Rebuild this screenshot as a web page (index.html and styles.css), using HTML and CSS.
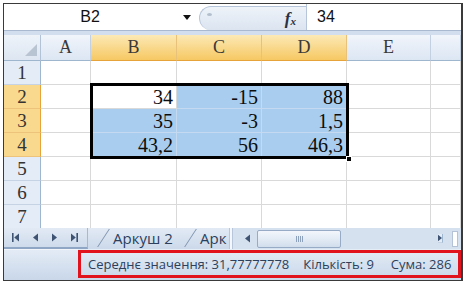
FILE: index.html
```html
<!DOCTYPE html>
<html lang="uk">
<head>
<meta charset="utf-8">
<title>Excel</title>
<link rel="stylesheet" href="styles.css">
</head>
<body>
<div class="window">
  <div class="fbar">
    <div class="namebox"><span class="name">B2</span><span class="arrow"></span></div>
    <div class="fxzone">
      <div class="pill"><span class="grip"></span><span class="fx"><i>f</i><sub>x</sub></span></div>
    </div>
    <div class="finput">34</div>
  </div>
  <div class="sep"></div>
  <div class="sheet">
    <div class="corner"><span class="tri"></span></div>
    <div class="h">A</div><div class="h sel">B</div><div class="h sel">C</div><div class="h sel">D</div><div class="h">E</div><div class="h"></div>

    <div class="r">1</div><div class="c"></div><div class="c"></div><div class="c"></div><div class="c"></div><div class="c"></div><div class="c"></div>
    <div class="r sel">2</div><div class="c"></div><div class="c">34</div><div class="c s">-15</div><div class="c s">88</div><div class="c"></div><div class="c"></div>
    <div class="r sel">3</div><div class="c"></div><div class="c s">35</div><div class="c s">-3</div><div class="c s">1,5</div><div class="c"></div><div class="c"></div>
    <div class="r sel">4</div><div class="c"></div><div class="c s">43,2</div><div class="c s">56</div><div class="c s">46,3</div><div class="c"></div><div class="c"></div>
    <div class="r">5</div><div class="c"></div><div class="c"></div><div class="c"></div><div class="c"></div><div class="c"></div><div class="c"></div>
    <div class="r">6</div><div class="c"></div><div class="c"></div><div class="c"></div><div class="c"></div><div class="c"></div><div class="c"></div>
    <div class="r">7</div><div class="c"></div><div class="c"></div><div class="c"></div><div class="c"></div><div class="c"></div><div class="c"></div>

    <div class="selbox"><span class="handle"></span></div>
  </div>
  <div class="tabbar">
    <div class="nav">
      <svg width="7" height="9" viewBox="0 0 7 9"><rect x="0" y="0" width="1.6" height="9" fill="#3f5473"/><path d="M7 0.5 L2.2 4.5 L7 8.5 Z" fill="#3f5473"/></svg>
      <svg width="5" height="9" viewBox="0 0 5 9"><path d="M5 0.5 L0 4.5 L5 8.5 Z" fill="#3f5473"/></svg>
      <svg width="5" height="9" viewBox="0 0 5 9"><path d="M0 0.5 L5 4.5 L0 8.5 Z" fill="#3f5473"/></svg>
      <svg width="7" height="9" viewBox="0 0 7 9"><path d="M0 0.5 L4.8 4.5 L0 8.5 Z" fill="#3f5473"/><rect x="5.4" y="0" width="1.6" height="9" fill="#3f5473"/></svg>
    </div>
    <div class="tab t1">Аркуш 2</div>
    <div class="tab t2">Арк</div>
    <div class="split"></div>
    <div class="hscroll">
      <svg class="sarrow" width="5" height="9" viewBox="0 0 5 9"><path d="M5 0.5 L0 4.5 L5 8.5 Z" fill="#3f5473"/></svg>
      <div class="thumb"><span class="gl"></span></div>
      <svg class="sarrow r" width="5" height="9" viewBox="0 0 5 9"><path d="M0 0.5 L5 4.5 L0 8.5 Z" fill="#3f5473"/></svg>
      <div class="vbox"></div>
    </div>
  </div>
  <div class="status">
    <div class="sleft"></div>
    <div class="sbox">
      <span class="st st1">Середнє значення: 31,77777778</span>
      <span class="st st2">Кількість: 9</span>
      <span class="st st3">Сума: 286</span>
    </div>
  </div>
</div>
</body>
</html>
```
FILE: styles.css
```css
* { box-sizing: border-box; margin: 0; padding: 0; }
html, body { background: #fff; }
body { width: 468px; height: 282px; overflow: hidden; font-family: "Open Sans", sans-serif; }

.window {
  margin: 3px 0 0 3px;
  width: 460px;
  height: 278px;
  border: 1px solid #3a3a3a;
  border-right-width: 2px;
  display: flex;
  flex-direction: column;
  overflow: hidden;
  background: #fff;
}

/* formula bar */
.fbar { height: 27px; display: flex; border-bottom: 1px solid #a9bad0; background: #fff; }
.namebox { flex: 0 0 192px; display: flex; align-items: center; }
.name { width: 172px; text-align: center; font: 16px "Liberation Sans", sans-serif; color: #111; }
.arrow { margin-left: 7px; width: 0; height: 0; border-top: 5px solid #111; border-left: 4px solid transparent; border-right: 4px solid transparent; }
.fxzone { flex: 0 0 110px; padding: 2px 0 0 3px; }
.pill {
  height: 100%;
  border: 1px solid #b6c5d9;
  border-right: none;
  border-bottom: none;
  border-radius: 12px 0 0 12px;
  background: linear-gradient(#eef3f9, #dbe4f0);
  display: flex;
  align-items: center;
  justify-content: space-between;
  padding: 0 10px 0 7px;
}
.grip { width: 5px; height: 3px; border-radius: 50%; background: #b3bfcf; align-self: flex-start; margin-top: 6px; }
.fx { font: bold 17px "Liberation Serif", serif; color: #2a3142; line-height: 1; }
.fx i { font-style: italic; }
.fx sub { font-size: 11px; font-style: italic; vertical-align: -1px; }
.finput { flex: 1; border-left: 1px solid #b6c5d9; padding-left: 10px; font: 16px/26px "Liberation Sans", sans-serif; color: #111; }

.sep { height: 4px; background: #d2deed; }

/* sheet */
.sheet {
  position: relative;
  height: 193px;
  flex: 0 0 193px;
  overflow: hidden;
  display: grid;
  grid-template-columns: 37px 50px 86px 85px 85px 84px 30px;
  grid-template-rows: 26px repeat(7, 24px);
}
.corner { background: linear-gradient(#eef3fa, #dde6f2); border-right: 1px solid #b3c3d7; border-bottom: 1px solid #9eb6ce; position: relative; }
.tri { position: absolute; right: 3px; bottom: 4px; width: 0; height: 0; border-left: 12px solid transparent; border-bottom: 12px solid #b9c4d2; }
.h {
  background: linear-gradient(#f1f5fb, #dce6f3);
  border-right: 1px solid #c3d0e1;
  border-bottom: 1px solid #9eb6ce;
  font: 18px/25px "Liberation Serif", serif;
  color: #3a3a3a;
  text-align: center;
}
.h.sel { background: linear-gradient(#fce9b5, #f6c863); border-right-color: #e8c27a; border-bottom-color: #e6a33a; }
.r {
  background: #e4ecf7;
  border-right: 1px solid #9eb6ce;
  border-bottom: 1px solid #c5d3e4;
  font: 19px/23px "Liberation Serif", serif;
  color: #333;
  text-align: center;
}
.r.sel { background: #f9d98e; border-right-color: #e6a33a; border-bottom-color: #edc27a; }
.c {
  border-right: 1px solid #d9d9d9;
  border-bottom: 1px solid #d9d9d9;
  font: 20px/24px "Liberation Serif", serif;
  color: #0d0d0d;
  text-align: right;
  padding-right: 3px;
}
.c.s { background: #a9cdef; border-color: #c5daf1; }
.selbox {
  position: absolute;
  left: 86px;
  top: 48px;
  width: 259px;
  height: 76px;
  border: 3px solid #000;
  z-index: 1;
}
.handle { position: absolute; right: -6px; bottom: -6px; width: 6px; height: 6px; background: #000; border: 1px solid #fff; }

/* tab bar */
.tabbar { height: 21px; flex: 0 0 21px; display: flex; background: linear-gradient(#e2eaf5, #ccd9ea); }
.nav {
  flex: 0 0 84px;
  display: flex;
  align-items: center;
  gap: 14px;
  padding: 0 0 1px 8px;
  border-right: 1px solid #a7b8cf;
  border-bottom: 2px solid #8fa6c5;
}
.tab {
  position: relative;
  font: 15px/21px "Open Sans", sans-serif;
  color: #2c3f5d;
  white-space: nowrap;
  overflow: hidden;
}
.tab::before {
  content: "";
  position: absolute;
  left: 0;
  top: 1px;
  width: 1px;
  height: 18px;
  background: #7f93ae;
}
.t1 { flex: 0 0 92px; padding-left: 25px; }
.t1::before { left: 15px; transform: skewX(-33deg); }
.t2 { flex: 0 0 49px; padding-left: 20px; }
.t2::before { left: 10px; transform: skewX(-33deg); }
.split { flex: 0 0 4px; background: #f4f7fb; border-left: 1px solid #b7c6da; border-right: 1px solid #b7c6da; }
.hscroll { flex: 1; display: flex; align-items: center; background: #d6e1ef; padding-left: 12px; }
.sarrow { flex: 0 0 auto; }
.thumb {
  margin-left: 7px;
  width: 84px;
  height: 18px;
  border: 1px solid #97abc6;
  border-radius: 2px;
  background: linear-gradient(#f3f7fc, #d2deed);
  display: flex;
  align-items: center;
  justify-content: center;
}
.gl { width: 7px; height: 6px; background: repeating-linear-gradient(90deg, #8ea1ba 0 1px, transparent 1px 2px); }
.sarrow.r { margin-left: 97px; }
.vbox { margin-left: 9px; width: 6px; height: 16px; background: #fff; border: 1px solid #b3c2d6; }

/* status bar */
.status { height: 31px; flex: 0 0 31px; display: flex; background: linear-gradient(#e4ecf6, #c9d7ea); }
.sleft { flex: 0 0 74px; border-top: 1px solid #f2f6fb; }
.sbox {
  flex: 1;
  margin: 1px 0 2px;
  border: 3px solid #e1141e;
  display: flex;
  align-items: center;
  padding-left: 7px;
  font: 13px "Open Sans", sans-serif;
  color: #2d3f5a;
  white-space: nowrap;
}
.st2 { margin-left: 14px; }
.st3 { margin-left: 17px; }
```
